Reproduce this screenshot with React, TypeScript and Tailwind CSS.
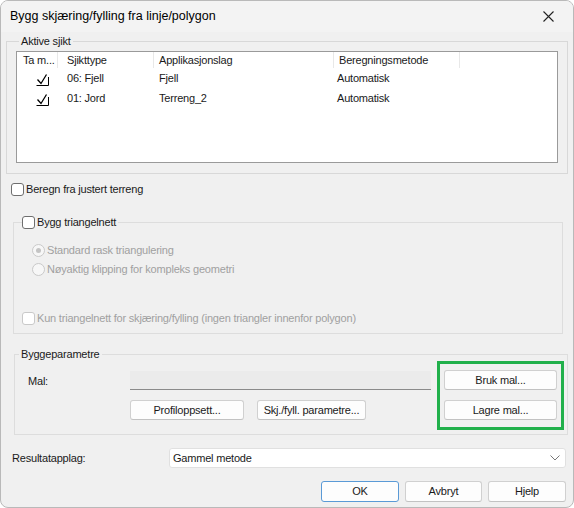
import React from "react";

const font = { fontFamily: '"Liberation Sans", Arial, sans-serif' };

function CheckMark() {
  return (
    <svg width="13" height="13" viewBox="0 0 13 13" fill="none" stroke="#000" strokeWidth="1">
      <path d="M1.5 6.5 L5 10.5 L10.5 1.5" strokeWidth="1.3" />
      <path d="M0.5 12.5 H12.5 M12.5 4 V12.5" />
    </svg>
  );
}

function Box({ disabled }: { disabled?: boolean }) {
  return (
    <span
      className={`inline-block h-[13px] w-[13px] shrink-0 rounded-[3px] border bg-white ${
        disabled ? "border-[#c9c9c9] bg-[#f7f7f7]" : "border-[#6e6e6e]"
      }`}
    />
  );
}

function Radio({ checked }: { checked?: boolean }) {
  return (
    <span className="flex h-[13px] w-[13px] shrink-0 items-center justify-center rounded-full border border-[#c9c9c9] bg-[#f7f7f7]">
      {checked && <span className="h-[5px] w-[5px] rounded-full bg-[#c4c4c4]" />}
    </span>
  );
}

function Btn({ children, className = "" }: { children: React.ReactNode; className?: string }) {
  return (
    <button
      type="button"
      className={`flex h-[20px] items-center justify-center rounded-[3px] border border-[#d0d0d0] border-b-[#c2c2c2] bg-[#fdfdfd] text-[11px] tracking-[-0.2px] text-[#1a1a1a] ${className}`}
    >
      {children}
    </button>
  );
}

export default function App() {
  const rows = [
    { type: "06: Fjell", app: "Fjell", method: "Automatisk" },
    { type: "01: Jord", app: "Terreng_2", method: "Automatisk" },
  ];

  return (
    <div
      className="relative h-[508px] w-[574px] overflow-hidden rounded-[8px] border border-[#b9b9b9] bg-[#f0f0f0] text-[11px] tracking-[-0.2px] text-[#1a1a1a]"
      style={font}
    >
      {/* Title bar */}
      <div className="flex h-[31px] items-center justify-between bg-[#f3f3f3] pl-[9px] pr-[19px]">
        <span className="text-[12.5px] tracking-normal text-black">Bygg skjæring/fylling fra linje/polygon</span>
        <svg width="11" height="11" viewBox="0 0 11 11" stroke="#222" strokeWidth="1.1">
          <path d="M0.5 0.5 L10.5 10.5 M10.5 0.5 L0.5 10.5" />
        </svg>
      </div>

      {/* Aktive sjikt */}
      <fieldset className="mx-[5px] mt-[2px] h-[140px] border border-[#d8d8d8] px-[9px] pb-[9px]">
        <legend className="ml-[3px] px-[2px] leading-[14px]">Aktive sjikt</legend>
        <div className="mt-[3px] h-[112px] border border-[#9a9a9a] bg-white">
          <div className="flex h-[16px] items-center whitespace-nowrap">
            <div className="w-[41px] overflow-hidden border-r border-[#e8e8e8] pl-[6px] leading-[16px]">Ta m...</div>
            <div className="w-[96px] border-r border-[#e8e8e8] pl-[9px] leading-[16px]">Sjikttype</div>
            <div className="w-[180px] border-r border-[#e8e8e8] pl-[5px] leading-[16px]">Applikasjonslag</div>
            <div className="w-[126px] border-r border-[#e8e8e8] pl-[5px] leading-[16px]">Beregningsmetode</div>
          </div>
          {rows.map((r) => (
            <div key={r.type} className="flex h-[20px] items-center whitespace-nowrap">
              <div className="flex w-[41px] justify-end pr-[9px] pt-[3px]">
                <CheckMark />
              </div>
              <div className="w-[96px] pl-[9px]">{r.type}</div>
              <div className="w-[180px] pl-[5px]">{r.app}</div>
              <div className="w-[126px] pl-[3px]">{r.method}</div>
            </div>
          ))}
        </div>
      </fieldset>

      {/* Beregn fra justert terreng */}
      <label className="mt-[8px] ml-[10px] flex h-[14px] items-center gap-[2px]">
        <Box />
        <span>Beregn fra justert terreng</span>
      </label>

      {/* Bygg triangelnett */}
      <fieldset className="ml-[12px] mr-[10px] mt-[18px] h-[120px] border border-[#dddddd] pl-[18px]">
        <legend className="-ml-[10px] flex items-center gap-[2px] pr-[2px]">
          <Box />
          <span>Bygg triangelnett</span>
        </legend>
        <div className="mt-[13px] flex flex-col gap-[6px] text-[#a0a0a0]">
          <div className="flex h-[13px] items-center gap-[2px]">
            <Radio checked />
            <span>Standard rask triangulering</span>
          </div>
          <div className="flex h-[13px] items-center gap-[2px]">
            <Radio />
            <span>Nøyaktig klipping for kompleks geometri</span>
          </div>
        </div>
        <div className="-ml-[10px] mt-[36px] flex h-[14px] items-center gap-[2px] text-[#a0a0a0]">
          <Box disabled />
          <span>Kun triangelnett for skjæring/fylling (ingen triangler innenfor polygon)</span>
        </div>
      </fieldset>

      {/* Byggeparametre */}
      <fieldset className="ml-[13px] mr-[5px] mt-[13px] h-[88px] border border-[#dddddd]">
        <legend className="ml-[4px] px-[2px] leading-[14px]">Byggeparametre</legend>
        <div className="flex pt-[9px]">
          <div className="flex flex-col pl-[13px]">
            <div className="flex h-[20px] items-center">
              <span className="w-[102px] pt-[2px]">Mal:</span>
              <div className="h-[19px] w-[301px] border-b border-[#8a8a8a] bg-[#ebebeb]" />
            </div>
            <div className="mt-[10px] flex gap-[13px] pl-[102px]">
              <Btn className="w-[114px]">Profiloppsett...</Btn>
              <Btn className="w-[109px]">Skj./fyll. parametre...</Btn>
            </div>
          </div>
          <div className="ml-[6px] -mt-[9px] flex h-[69px] w-[127px] flex-col gap-[10px] border-[3px] border-[#21b04b] px-[4px] pt-[6px]">
            <Btn className="w-full">Bruk mal...</Btn>
            <Btn className="w-full">Lagre mal...</Btn>
          </div>
        </div>
      </fieldset>

      {/* Resultatapplag */}
      <div className="mt-[13px] flex items-center pl-[11px] pr-[7px]">
        <span className="w-[157px]">Resultatapplag:</span>
        <div className="flex h-[20px] flex-1 items-center justify-between rounded-[3px] border border-[#e0e0e0] bg-white pl-[3px] pr-[5px]">
          <span>Gammel metode</span>
          <svg width="10" height="6" viewBox="0 0 10 6" fill="none" stroke="#777" strokeWidth="1">
            <path d="M0.5 0.5 L5 5 L9.5 0.5" />
          </svg>
        </div>
      </div>

      {/* Dialog buttons */}
      <div className="mt-[13px] flex justify-end gap-[6px] pr-[7px]">
        <button
          type="button"
          className="flex h-[21px] w-[78px] items-center justify-center rounded-[3px] border border-[#5a9ad6] bg-[#fdfdfd] text-[11px]"
        >
          OK
        </button>
        <Btn className="h-[21px] w-[77px]">Avbryt</Btn>
        <Btn className="h-[21px] w-[78px]">Hjelp</Btn>
      </div>
    </div>
  );
}
